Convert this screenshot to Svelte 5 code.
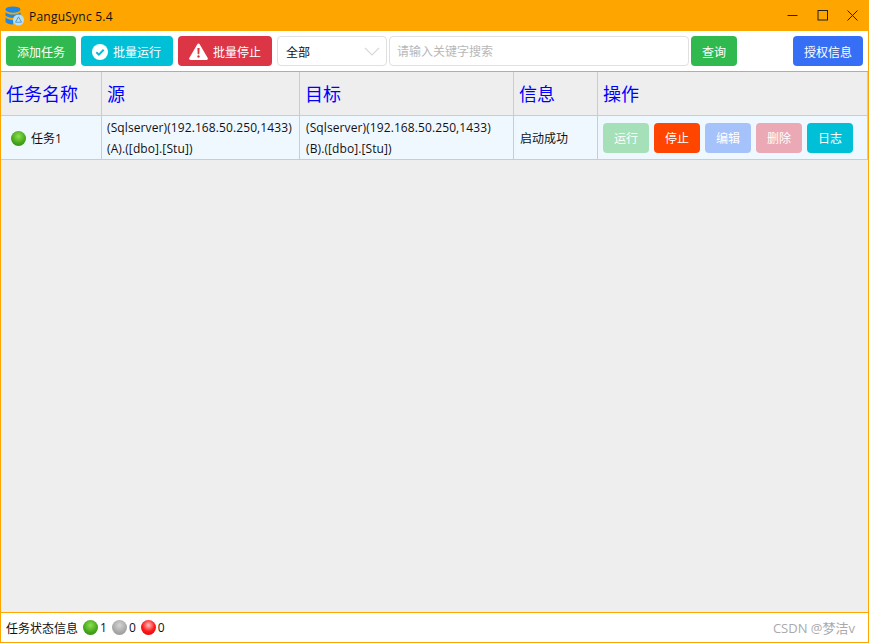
<script>
  const columns = ['任务名称', '源', '目标', '信息', '操作'];
  const actions = [
    { label: '运行', cls: 'run' },
    { label: '停止', cls: 'stop' },
    { label: '编辑', cls: 'edit' },
    { label: '删除', cls: 'del' },
    { label: '日志', cls: 'log' }
  ];
  const stats = [
    { cls: 'green', n: 1 },
    { cls: 'gray', n: 0 },
    { cls: 'red', n: 0 }
  ];
</script>

<div class="win">
  <header class="title">
    <svg class="logo" width="20" height="20" viewBox="0 0 20 20">
      <ellipse cx="8" cy="3.6" rx="7.5" ry="3.2" fill="#1e88e5"/>
      <path d="M0.5 6.2c1.6 1.6 4.4 2.4 7.5 2.4s5.900-.8 7.500-2.400v3.400c-1.600 1.500-4.400 2.400-7.500 2.400s-5.900-.9-7.500-2.400z" fill="#1e88e5"/>
      <path d="M0.500 11.600c1.600 1.500 4.400 2.400 7.500 2.400v4.500c-4 0-7.500-1.300-7.500-3.200z" fill="#1e88e5"/>
      <circle cx="13.500" cy="14" r="5.500" fill="#b9dff5"/>
      <path d="M13.500 10.800l3 5.400h-6z" fill="none" stroke="#5a9cc5" stroke-width="1"/>
    </svg>
    <span class="app-name">PanguSync 5.4</span>
    <div class="win-btns">
      <svg width="11" height="11" viewBox="0 0 11 11"><path d="M0.500 5.500h10" stroke="#222" fill="none"/></svg>
      <svg width="11" height="11" viewBox="0 0 11 11"><rect x="1" y="0.500" width="9.500" height="9.500" stroke="#222" fill="none"/></svg>
      <svg width="11" height="11" viewBox="0 0 11 11"><path d="M0.500 0.500l10 10M10.500 0.500l-10 10" stroke="#222" fill="none"/></svg>
    </div>
  </header>

  <div class="toolbar">
    <button class="btn add">添加任务</button>
    <button class="btn batch-run">
      <svg width="16" height="16" viewBox="0 0 16 16"><circle cx="8" cy="8" r="8" fill="#fff"/><path d="M4.300 8.200l2.600 2.500 4.800-5" fill="none" stroke="#00c0d8" stroke-width="2"/></svg>
      批量运行
    </button>
    <button class="btn batch-stop">
      <svg width="19" height="17" viewBox="0 0 19 17"><path d="M9.500 0.500a1.400 1.400 0 0 1 1.200.7l8 13.700a1.400 1.400 0 0 1-1.200 2.100h-16a1.400 1.400 0 0 1-1.200-2.100l8-13.700a1.400 1.400 0 0 1 1.200-.7z" fill="#fff"/><path d="M8.400 5h2.200l-.3 6.200h-1.600z" fill="#dc3545"/><circle cx="9.500" cy="13.500" r="1.200" fill="#dc3545"/></svg>
      批量停止
    </button>
    <div class="select">
      <span>全部</span>
      <svg width="16" height="9" viewBox="0 0 16 9"><path d="M1 1l7 7 7-7" fill="none" stroke="#d8d8d8" stroke-width="1.200"/></svg>
    </div>
    <div class="search">请输入关键字搜索</div>
    <button class="btn query">查询</button>
    <button class="btn license">授权信息</button>
  </div>

  <main class="content">
    <div class="grid">
      {#each columns as c}
        <div class="th">{c}</div>
      {/each}
      <div class="td name"><i class="dot green"></i>任务1</div>
      <div class="td db">(Sqlserver)(192.168.50.250,1433)<br />(A).([dbo].[Stu])</div>
      <div class="td db col3">(Sqlserver)(192.168.50.250,1433)<br />(B).([dbo].[Stu])</div>
      <div class="td info">启动成功</div>
      <div class="td ops">
        {#each actions as a}
          <button class="btn {a.cls}">{a.label}</button>
        {/each}
      </div>
    </div>
  </main>

  <footer class="status">
    <span class="status-label">任务状态信息</span>
    {#each stats as s}
      <i class="dot {s.cls}"></i><span class="count">{s.n}</span>
    {/each}
    <span class="credit">CSDN @梦洁v</span>
  </footer>
</div>

<style>
  :global(body) {
    margin: 0;
    font-family: "Open Sans", "Noto Sans CJK SC", sans-serif;
  }
  .win {
    width: 869px;
    height: 643px;
    box-sizing: border-box;
    display: flex;
    flex-direction: column;
    border: 1px solid #ffa500;
    border-top: 0;
    background: #eee;
    overflow: hidden;
  }
  .title {
    height: 31px;
    flex: none;
    margin: 0 -1px;
    background: #ffa500;
    display: flex;
    align-items: center;
    padding-left: 5px;
    color: #111;
    font-size: 12px;
  }
  .app-name {
    margin: 2px 0 0 4px;
    letter-spacing: 0.23px;
  }
  .logo { flex: none; }
  .win-btns {
    margin-left: auto;
    display: flex;
    gap: 19px;
    padding-right: 11px;
  }
  .win-btns svg { display: block; }
  .toolbar {
    height: 41px;
    flex: none;
    box-sizing: border-box;
    background: #fff;
    border-bottom: 1px solid #ffa500;
    display: flex;
    align-items: flex-start;
    padding: 5px 0 0 5px;
  }
  .btn {
    height: 30px;
    border: 0;
    border-radius: 4px;
    color: #fff;
    font: inherit;
    font-size: 12px;
    padding: 0;
    display: flex;
    align-items: center;
    justify-content: center;
    flex: none;
  }
  .toolbar .btn, .select, .search { padding-top: 1px; }
  .add { width: 70px; background: #2fb94f; margin-right: 5px; }
  .batch-run { width: 92px; background: #00c0d8; gap: 5px; margin-right: 5px; padding-right: 1px; }
  .batch-stop { width: 94px; background: #dc3545; gap: 5px; margin-right: 5px; }
  .select {
    width: 110px;
    height: 30px;
    box-sizing: border-box;
    border: 1px solid #e0e0e0;
    border-radius: 4px;
    display: flex;
    align-items: center;
    justify-content: space-between;
    padding-left: 8px;
    padding-right: 6px;
    font-size: 12px;
    color: #111;
    margin-right: 2px;
    flex: none;
  }
  .search {
    width: 300px;
    height: 30px;
    box-sizing: border-box;
    border: 1px solid #e0e0e0;
    border-radius: 4px;
    padding-left: 7px;
    font-size: 12px;
    line-height: 28px;
    color: #b8b8b8;
    margin-right: 2px;
    flex: none;
  }
  .query { width: 46px; background: #2fb94f; }
  .license { width: 70px; background: #366ff5; margin-left: 56px; }
  .content { flex: 1; min-height: 0; }
  .grid {
    display: grid;
    grid-template-columns: 101px 198px 214px 84px 270px;
    grid-template-rows: 44px 44px;
    width: 867px;
  }
  .th, .td {
    box-sizing: border-box;
    border-right: 1px solid #ccc;
    border-bottom: 1px solid #ccc;
    display: flex;
    align-items: center;
    padding-left: 5px;
    min-width: 0;
  }
  .th {
    color: #0000ff;
    font-size: 18px;
    padding-bottom: 2px;
    background: #eee;
  }
  .td {
    background: #f0f8ff;
    font-size: 12px;
    color: #111;
    padding-top: 1px;
  }
  .name { padding-left: 10px; }
  .name .dot { margin-right: 5px; }
  .db {
    display: block;
    line-height: 21px;
    padding-top: 1px;
    white-space: nowrap;
    letter-spacing: 0.1px;
  }
  .col3, .info { padding-left: 6px; }
  .ops { gap: 5px; }
  .run { width: 46px; background: #a6e0b8; }
  .stop { width: 46px; background: #ff4500; }
  .edit { width: 46px; background: #a6c2fb; }
  .del { width: 46px; background: #eaa9b4; }
  .log { width: 46px; background: #00c0d8; }
  .dot {
    display: inline-block;
    width: 15px;
    height: 15px;
    border-radius: 50%;
    flex: none;
  }
  .green { background: radial-gradient(circle at 50% 35%, #8ee04e, #46a81c 55%, #2c7a10); }
  .gray { background: radial-gradient(circle at 50% 35%, #d4d4d4, #aaa 55%, #8f8f8f); }
  .red { background: radial-gradient(circle at 50% 35%, #ffc0c0, #ff1a1a 50%, #d00000); }
  .status {
    height: 30px;
    flex: none;
    box-sizing: border-box;
    background: #fff;
    border-top: 1px solid #ffa500;
    display: flex;
    align-items: center;
    padding-left: 5px;
    font-size: 12px;
    color: #111;
  }
  .status-label { margin-right: 5px; }
  .count { margin: 0 5px 0 2px; }
  .credit {
    margin-left: auto;
    margin-right: 13px;
    color: #aaa;
    font-size: 13px;
  }
</style>
